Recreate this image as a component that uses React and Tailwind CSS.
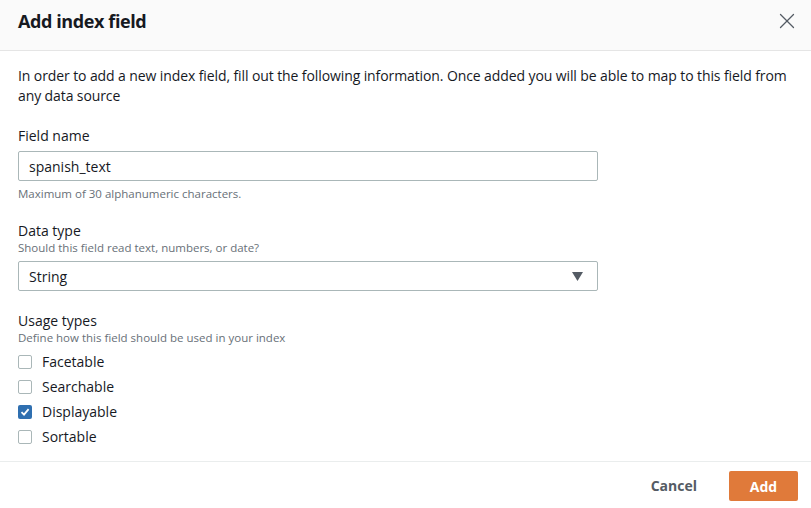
import { X } from "lucide-react";

function Checkbox({ label, checked }) {
  return (
    <label className="flex items-center h-[25px]">
      {checked ? (
        <span className="w-[14px] h-[14px] rounded-[2px] bg-[#2f6fb0] flex items-center justify-center">
          <svg width="10" height="10" viewBox="0 0 10 10">
            <path d="M1.5 5.2 L4 7.6 L8.6 2.2" fill="none" stroke="white" strokeWidth="1.8" />
          </svg>
        </span>
      ) : (
        <span className="w-[14px] h-[14px] rounded-[2px] border border-[#aab7b8] bg-white" />
      )}
      <span className="ml-[10px] text-[14px] text-[#16191f]">{label}</span>
    </label>
  );
}

export default function App() {
  return (
    <div className="w-[811px] h-[508px] bg-white flex flex-col" style={{ fontFamily: '"Open Sans", sans-serif' }}>
      <div className="h-[51px] bg-[#fafafa] border-b border-[#e5e5e5] flex items-center justify-between pl-[18px] pr-[11px]">
        <h1 className="text-[18px] font-bold text-[#16191f] tracking-[-0.4px] -mt-[8px]">Add index field</h1>
        <X size={26} strokeWidth={1.2} className="text-[#545b64] -mt-[8px]" />
      </div>

      <div className="px-[18px] pt-[15px] flex-1">
        <p className="text-[14px] leading-[20px] text-[#16191f] tracking-[-0.1px]">
          In order to add a new index field, fill out the following information. Once added you will be able to map to this field from any data source
        </p>

        <div className="mt-[20px]">
          <div className="text-[14px] leading-[20px] text-[#16191f]">Field name</div>
          <div className="mt-[5px] w-[580px] h-[30px] border border-[#aab7b8] rounded-[2px] flex items-center px-[10px] text-[14px] text-[#16191f]">
            spanish_text
          </div>
          <div className="mt-[5px] text-[11.5px] leading-[16px] text-[#687078]">Maximum of 30 alphanumeric characters.</div>
        </div>

        <div className="mt-[20px]">
          <div className="text-[14px] leading-[18px] text-[#16191f]">Data type</div>
          <div className="text-[11.5px] leading-[16px] text-[#687078]">Should this field read text, numbers, or date?</div>
          <div className="mt-[5px] w-[580px] h-[30px] border border-[#aab7b8] rounded-[2px] flex items-center justify-between pl-[10px] pr-[14px] text-[14px] text-[#16191f]">
            <span>String</span>
            <svg width="11" height="9" viewBox="0 0 11 9">
              <path d="M0 0 H11 L5.5 9 Z" fill="#545b64" />
            </svg>
          </div>
        </div>

        <div className="mt-[21px]">
          <div className="text-[14px] leading-[18px] text-[#16191f]">Usage types</div>
          <div className="text-[11.5px] leading-[16px] text-[#687078]">Define how this field should be used in your index</div>
          <div className="mt-[3px] flex flex-col">
            <Checkbox label="Facetable" />
            <Checkbox label="Searchable" />
            <Checkbox label="Displayable" checked />
            <Checkbox label="Sortable" />
          </div>
        </div>
      </div>

      <div className="h-[47px] border-t border-[#eaeded] flex items-start justify-end pr-[13px] pt-[9px]">
        <button className="mt-[4px] mr-[32px] text-[14px] font-bold text-[#545b64]">Cancel</button>
        <button className="w-[69px] h-[30px] rounded-[2px] bg-[#e07a3a] text-white text-[14px] font-bold">Add</button>
      </div>
    </div>
  );
}
